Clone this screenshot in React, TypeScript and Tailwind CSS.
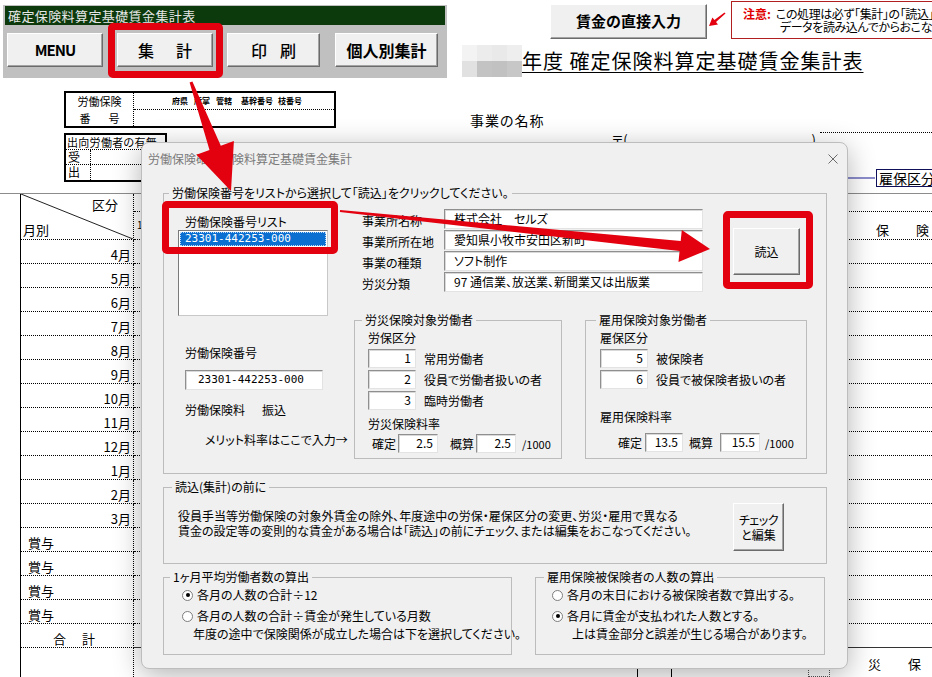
import React from "react";

const JP = "font-['Noto_Sans_CJK_JP','Noto_Sans',sans-serif] [font-feature-settings:'palt']";
const MONO = "font-['DejaVu_Sans_Mono','Liberation_Mono',monospace]";

const sunken =
  "bg-white border border-t-[#8f8f8f] border-l-[#8f8f8f] border-r-[#e3e3e3] border-b-[#e3e3e3] shadow-[inset_1px_1px_0_#d9d9d9]";
const raised =
  "bg-[#f0f0f0] border border-t-white border-l-white border-r-[#6b6b6b] border-b-[#6b6b6b] shadow-[inset_-1px_-1px_0_#a3a3a3]";

function arrowPoints(
  x1: number,
  y1: number,
  x2: number,
  y2: number,
  w0: number,
  w1: number,
  hl: number,
  hw: number
) {
  const dx = x2 - x1;
  const dy = y2 - y1;
  const L = Math.hypot(dx, dy);
  const ux = dx / L;
  const uy = dy / L;
  const px = -uy;
  const py = ux;
  const bx = x2 - ux * hl;
  const by = y2 - uy * hl;
  const pts = [
    [x1 + (px * w0) / 2, y1 + (py * w0) / 2],
    [bx + (px * w1) / 2, by + (py * w1) / 2],
    [bx + px * hw, by + py * hw],
    [x2, y2],
    [bx - px * hw, by - py * hw],
    [bx - (px * w1) / 2, by - (py * w1) / 2],
    [x1 - (px * w0) / 2, y1 - (py * w0) / 2],
  ];
  return pts.map(([a, b]) => `${a.toFixed(1)},${b.toFixed(1)}`).join(" ");
}

function Group({
  title,
  className = "",
  legendClass = "",
  children,
}: {
  title: string;
  className?: string;
  legendClass?: string;
  children?: React.ReactNode;
}) {
  return (
    <fieldset className={`min-w-0 shrink-0 border border-[#bcbcbc] ${className}`}>
      <legend className={`px-[3px] text-[12px] leading-[16px] ${legendClass}`}>{title}</legend>
      {children}
    </fieldset>
  );
}

function Radio({ on }: { on?: boolean }) {
  return (
    <span className="flex h-[11px] w-[11px] shrink-0 items-center justify-center rounded-full border border-[#7d7d7d] bg-white">
      {on && <span className="h-[4px] w-[4px] rounded-full bg-black" />}
    </span>
  );
}

function NumBox({ v, w }: { v: string; w: string }) {
  return (
    <div className={`${sunken} ${w} h-[19px] shrink-0 pr-[4px] text-right text-[12px] leading-[16px]`}>{v}</div>
  );
}

const months = ["4月", "5月", "6月", "7月", "8月", "9月", "10月", "11月", "12月", "1月", "2月", "3月"];

function SheetRow({ children, label, lastSolid }: { children?: React.ReactNode; label?: React.ReactNode; lastSolid?: boolean }) {
  return (
    <div className="flex h-[24px]">
      <div className="w-[21px] shrink-0 border-r border-black" />
      <div className="flex w-[113px] shrink-0 items-end border-b border-r border-dotted border-black text-[13px] leading-[17px]">
        {label}
      </div>
      <div className={`flex-1 border-b ${lastSolid ? "border-solid border-[#333]" : "border-dotted border-black"}`}>
        {children}
      </div>
    </div>
  );
}

export default function App() {
  return (
    <div className={`relative h-[677px] w-[932px] overflow-hidden bg-white text-black ${JP}`}>
      {/* toolbar + heading */}
      <div className="flex h-[80px] items-start">
        <div className="ml-[3px] mt-[5px] h-[73px] w-[444px] shrink-0 bg-[#c0c0c0] px-[2px] pt-[1px]">
          <div className="h-[19px] bg-[#0c3a0c] pl-[3px] text-[13px] leading-[19px] tracking-[0.4px] text-[#e6e6e6]">
            確定保険料算定基礎賃金集計表
          </div>
          <div className="mt-[8px] flex">
            <button className={`${raised} ml-[2px] h-[34px] w-[96px] text-[15px] font-bold tracking-[-1px]`}>MENU</button>
            <button className={`${raised} ml-[14px] flex h-[34px] w-[96px] items-center justify-center gap-[22px] text-[16px] font-medium`}>
              <span>集</span>
              <span>計</span>
            </button>
            <button className={`${raised} ml-[14px] flex h-[34px] w-[93px] items-center justify-center gap-[13px] text-[16px] font-medium`}>
              <span>印</span>
              <span>刷</span>
            </button>
            <button className={`${raised} ml-[15px] h-[34px] w-[103px] text-[16px] font-bold`}>個人別集計</button>
          </div>
        </div>
        <div className="flex flex-col">
          <div className="flex items-start pl-[103px]">
            <button className={`${raised} mt-[4px] h-[35px] w-[157px] shrink-0 text-[15px] font-bold`}>賃金の直接入力</button>
            <div className="ml-[24px] mt-[1px] flex h-[38px] w-[240px] shrink-0 items-start border border-[#b02020] bg-white pl-[11px] pt-[5px]">
              <span className="shrink-0 whitespace-nowrap text-[12px] font-bold leading-[14px] text-[#e00000]">注意:</span>
              <div className="ml-[5px] shrink-0 whitespace-nowrap text-[12px] leading-[13px] tracking-[-0.4px]">
                <div>この処理は必ず「集計」の「読込」で</div>
                <div className="pl-[4px]">データを読み込んでからおこなってください。</div>
              </div>
            </div>
          </div>
          <div className="ml-[15px] mt-[6px] flex h-[32px] items-center">
            <div className="grid h-[32px] w-[60px] shrink-0 grid-cols-4 grid-rows-2">
              <div className="bg-[#f3f3f3]" />
              <div className="bg-[#ececec]" />
              <div className="bg-[#e9e9e9]" />
              <div className="bg-[#eeeeee]" />
              <div className="bg-[#e1e1e1]" />
              <div className="bg-[#c3c3c3]" />
              <div className="bg-[#c1c1c1]" />
              <div className="bg-[#c7c7c7]" />
            </div>
            <span className="whitespace-nowrap text-[20px] leading-[26px] tracking-[1px] underline decoration-1 underline-offset-[3px]">
              年度 確定保険料算定基礎賃金集計表
            </span>
          </div>
        </div>
      </div>

      {/* insurance number / establishment */}
      <div className="flex h-[113px]">
        <div className="ml-[64px] flex w-[272px] shrink-0 flex-col">
          <div className="mt-[11px] flex h-[37px] border-2 border-black">
            <div className="flex w-[68px] flex-col border-r border-dotted border-black text-[11px]">
              <div className="flex h-[17px] items-center justify-center">労働保険</div>
              <div className="flex h-[16px] items-center justify-center gap-[18px]">
                <span>番</span>
                <span>号</span>
              </div>
            </div>
            <div className="flex flex-1 flex-col">
              <div className="flex h-[17px] items-center whitespace-nowrap border-b border-dotted border-black pl-[38px] text-[8px] font-bold leading-[10px]">
                <span>府県</span>
                <span className="ml-[6px]">所掌</span>
                <span className="ml-[6px]">管轄</span>
                <span className="ml-[9px]">基幹番号</span>
                <span className="ml-[5px]">枝番号</span>
              </div>
            </div>
          </div>
          <div className="mt-[5px] flex h-[49px] w-[103px] flex-col border-2 border-black text-[12px] leading-[14px]">
            <div className="h-[15px] whitespace-nowrap border-b border-dotted border-black pl-[1px] text-[11px] tracking-[0.3px]">
              出向労働者の有無
            </div>
            <div className="flex h-[15px] border-b border-dotted border-black">
              <div className="w-[25px] border-r border-dotted border-black pl-[2px]">受</div>
            </div>
            <div className="flex flex-1">
              <div className="w-[25px] border-r border-dotted border-black pl-[2px]">出</div>
            </div>
          </div>
        </div>
        <div className="ml-[134px] flex w-[462px] shrink-0 flex-col">
          <div className="mt-[33px] h-[16px] text-[14px] leading-[15px] tracking-[1px]">事業の名称</div>
          <div className="mt-[3px] flex h-[16px] text-[13px] leading-[16px]">
            <span className="ml-[142px]">〒(</span>
            <span className="ml-[184px]">)</span>
            <div className="ml-auto h-0 w-[112px] border-t border-dotted border-black" />
          </div>
          <div className="mt-[21px] flex h-[17px] items-center">
            <div className="ml-[378px] h-[2px] w-[27px] shrink-0 bg-[#8c8ccc]" />
            <div className="ml-[1px] h-[18px] w-[70px] shrink-0 whitespace-nowrap border border-[#10105a] pl-[2px] text-[14px] leading-[16px]">
              雇保区分
            </div>
          </div>
        </div>
      </div>

      {/* monthly grid */}
      <div className="border-t border-[#8c8c8c]">
        <div className="flex h-[46px]">
          <div className="w-[21px] shrink-0 border-r border-black" />
          <div className="relative flex w-[113px] shrink-0 flex-col justify-between border-b border-r border-dotted border-black text-[13px] leading-[16px]">
            <svg className="absolute inset-0" width="112" height="45" viewBox="0 0 112 45">
              <line x1="0" y1="0" x2="112" y2="45" stroke="#222" strokeWidth="1" />
            </svg>
            <div className="mt-[3px] self-end pr-[15px]">区分</div>
            <div className="mb-[1px] pl-[2px]">月別</div>
          </div>
          <div className="flex flex-1 flex-col">
            <div className="h-[18px] border-b border-dotted border-black" />
            <div className="flex flex-1 items-end justify-between border-b border-dotted border-black pb-[1px] pl-[3px] pr-[3px] text-[13px] leading-[16px]">
              <span className="mb-[8px] text-[10px] leading-[10px]">1</span>
              <span className="flex gap-[27px]">
                <span>保</span>
                <span>険</span>
              </span>
            </div>
          </div>
        </div>
        {months.map((m) => (
          <SheetRow key={m} label={<span className="ml-auto pr-[2px]">{m}</span>} />
        ))}
        {[0, 1, 2, 3].map((i) => (
          <SheetRow key={`b${i}`} label={<span className="pl-[7px]">賞与</span>} />
        ))}
        <SheetRow
          lastSolid
          label={
            <span className="flex gap-[16px] pl-[32px]">
              <span>合</span>
              <span>計</span>
            </span>
          }
        />
        <div className="flex h-[29px]">
          <div className="w-[21px] shrink-0 border-r border-black" />
          <div className="w-[113px] shrink-0 border-r border-dotted border-black" />
          <div className="flex flex-1 text-[13px]">
            <div className="ml-[503px] w-px bg-black" />
            <div className="ml-[33px] w-px bg-black" />
            <div className="ml-[136px] mt-[20px] h-[9px] w-[22px] border border-dotted border-[#555]" />
            <span className="ml-[38px] mt-[8px] leading-[16px]">災</span>
            <span className="ml-[27px] mt-[8px] leading-[16px]">保</span>
          </div>
        </div>
      </div>

      {/* dialog */}
      <div className="absolute left-[141px] top-[142px] flex h-[527px] w-[707px] flex-col rounded-[8px] border border-[#bdbdbd] bg-[#f0f0f0] shadow-[0_6px_28px_rgba(0,0,0,0.3)]">
        <div className="flex h-[31px] shrink-0 items-center justify-between pl-[6px] pr-[9px] text-[12px] text-[#7a7a7a]">
          <span>労働保険確定保険料算定基礎賃金集計</span>
          <svg width="10" height="10" viewBox="0 0 10 10">
            <path d="M0.5 0.5 L9.5 9.5 M9.5 0.5 L0.5 9.5" stroke="#6a6a6a" strokeWidth="1" />
          </svg>
        </div>
        <div className="pl-[21px] pt-[11px] text-[12px]">
          <Group title="労働保険番号をリストから選択して「読込」をクリックしてください。" className="h-[289px] w-[664px]" legendClass="ml-[5px]">
            <div className="flex pl-[14px]">
              {/* number list */}
              <div className="flex w-[150px] shrink-0 flex-col">
                <div className="mt-[13px] pl-[7px] leading-[16px]">労働保険番号リスト</div>
                <div className="h-[86px] border border-t-[#7a7a7a] border-l-[#7a7a7a] border-r-[#c8c8c8] border-b-[#c8c8c8] bg-white p-px">
                  <div className={`h-[14px] bg-[#0a6fd1] pl-[5px] text-[11px] leading-[14px] text-white outline-1 -outline-offset-1 outline-dotted outline-[#bcd8f5] ${MONO}`}>
                    23301-442253-000
                  </div>
                </div>
                <div className="mt-[29px] pl-[7px] leading-[16px]">労働保険番号</div>
                <div className={`${sunken} ml-[7px] mt-[9px] h-[20px] w-[138px] pl-[12px] text-[11px] leading-[18px] ${MONO}`}>
                  23301-442253-000
                </div>
                <div className="mt-[12px] flex pl-[7px] leading-[16px]">
                  <span>労働保険料</span>
                  <span className="ml-[17px]">振込</span>
                </div>
                <div className="mt-[14px] whitespace-nowrap pl-[27px] leading-[16px]">メリット料率はここで入力→</div>
              </div>

              <div className="ml-[26px] flex flex-col">
                {/* establishment fields + load button */}
                <div className="mt-[8px] flex">
                  <div className="flex flex-col pl-[8px]">
                    {[
                      ["事業所名称", "株式会社　セルズ"],
                      ["事業所所在地", "愛知県小牧市安田区新町"],
                      ["事業の種類", "ソフト制作"],
                      ["労災分類", "97 通信業、放送業、新聞業又は出版業"],
                    ].map(([k, v]) => (
                      <div key={k} className="mb-[1px] flex h-[20px]">
                        <div className="w-[82px] shrink-0 pt-[4px] leading-[16px]">{k}</div>
                        <div className={`${sunken} h-[20px] w-[259px] pl-[9px] leading-[18px]`}>{v}</div>
                      </div>
                    ))}
                  </div>
                  <button className={`${raised} ml-[30px] mt-[19px] h-[47px] w-[67px] text-[12px]`}>読込</button>
                </div>

                {/* worker categories */}
                <div className="mt-[19px] flex">
                  <Group title="労災保険対象労働者" className="h-[147px] w-[208px]" legendClass="ml-[7px]">
                    <div className="flex flex-col pl-[13px]">
                      <div className="mt-[2px] leading-[16px]">労保区分</div>
                      {[
                        ["1", "常用労働者"],
                        ["2", "役員で労働者扱いの者"],
                        ["3", "臨時労働者"],
                      ].map(([n, t], i) => (
                        <div key={n} className={`flex items-center ${i === 0 ? "mt-[3px]" : "mt-[2px]"}`}>
                          <NumBox v={n} w="w-[48px]" />
                          <span className="ml-[8px] leading-[16px]">{t}</span>
                        </div>
                      ))}
                      <div className="mt-[6px] leading-[16px]">労災保険料率</div>
                      <div className="mt-[2px] flex items-center">
                        <span className="ml-[4px] leading-[16px]">確定</span>
                        <div className="ml-[2px]">
                          <NumBox v="2.5" w="w-[40px]" />
                        </div>
                        <span className="ml-[12px] leading-[16px]">概算</span>
                        <div className="ml-[2px]">
                          <NumBox v="2.5" w="w-[40px]" />
                        </div>
                        <span className="ml-[6px] text-[11px] leading-[16px]">/1000</span>
                      </div>
                    </div>
                  </Group>
                  <Group title="雇用保険対象労働者" className="ml-[23px] h-[147px] w-[222px]" legendClass="ml-[10px]">
                    <div className="flex flex-col pl-[14px]">
                      <div className="mt-[2px] leading-[16px]">雇保区分</div>
                      {[
                        ["5", "被保険者"],
                        ["6", "役員で被保険者扱いの者"],
                      ].map(([n, t], i) => (
                        <div key={n} className={`flex items-center ${i === 0 ? "mt-[3px]" : "mt-[2px]"}`}>
                          <NumBox v={n} w="w-[48px]" />
                          <span className="ml-[8px] leading-[16px]">{t}</span>
                        </div>
                      ))}
                      <div className="mt-[20px] leading-[16px]">雇用保険料率</div>
                      <div className="mt-[8px] flex items-center">
                        <span className="ml-[18px] leading-[16px]">確定</span>
                        <div className="ml-[3px]">
                          <NumBox v="13.5" w="w-[38px]" />
                        </div>
                        <span className="ml-[6px] leading-[16px]">概算</span>
                        <div className="ml-[7px]">
                          <NumBox v="15.5" w="w-[40px]" />
                        </div>
                        <span className="ml-[5px] text-[11px] leading-[16px]">/1000</span>
                      </div>
                    </div>
                  </Group>
                </div>
              </div>
            </div>
          </Group>

          <Group title="読込(集計)の前に" className="mt-[5px] h-[85px] w-[664px]" legendClass="ml-[8px]">
            <div className="flex">
              <div className="mt-[13px] whitespace-nowrap pl-[14px] leading-[15px]">
                <div>役員手当等労働保険の対象外賃金の除外、年度途中の労保・雇保区分の変更、労災・雇用で異なる</div>
                <div>賃金の設定等の変則的な賃金がある場合は「読込」の前にチェック、または編集をおこなってください。</div>
              </div>
              <button className={`${raised} ml-auto mr-[42px] mt-[8px] flex h-[48px] w-[51px] shrink-0 flex-col items-center justify-center text-[12px] leading-[15px]`}>
                <span className="tracking-[-0.5px]">チェック</span>
                <span>と編集</span>
              </button>
            </div>
          </Group>

          <div className="mt-[5px] flex">
            <Group title="1ヶ月平均労働者数の算出" className="h-[86px] w-[349px]" legendClass="ml-[6px]">
              <div className="flex flex-col pl-[18px]">
                <div className="mt-[2px] flex h-[16px] items-center">
                  <Radio on />
                  <span className="ml-[4px] leading-[16px]">各月の人数の合計÷12</span>
                </div>
                <div className="mt-[5px] flex h-[16px] items-center">
                  <Radio />
                  <span className="ml-[4px] leading-[16px]">各月の人数の合計÷賃金が発生している月数</span>
                </div>
                <div className="mt-[2px] whitespace-nowrap pl-[11px] leading-[16px]">
                  年度の途中で保険関係が成立した場合は下を選択してください。
                </div>
              </div>
            </Group>
            <Group title="雇用保険被保険者の人数の算出" className="ml-[23px] h-[86px] w-[290px]" legendClass="ml-[8px]">
              <div className="flex flex-col pl-[16px]">
                <div className="mt-[2px] flex h-[16px] items-center">
                  <Radio />
                  <span className="ml-[4px] leading-[16px]">各月の末日における被保険者数で算出する。</span>
                </div>
                <div className="mt-[5px] flex h-[16px] items-center">
                  <Radio on />
                  <span className="ml-[4px] leading-[16px]">各月に賃金が支払われた人数とする。</span>
                </div>
                <div className="mt-[2px] whitespace-nowrap pl-[20px] leading-[16px]">
                  上は賃金部分と誤差が生じる場合があります。
                </div>
              </div>
            </Group>
          </div>
        </div>
      </div>

      {/* callout frames */}
      <div className="pointer-events-none absolute left-[108px] top-[23px] h-[55px] w-[115px] rounded-[5px] border-[7px] border-[#e3000f]" />
      <div className="pointer-events-none absolute left-[162px] top-[201px] h-[53px] w-[176px] rounded-[5px] border-[7px] border-[#e3000f]" />
      <div className="pointer-events-none absolute left-[723px] top-[211px] h-[78px] w-[90px] rounded-[5px] border-[7px] border-[#e3000f]" />

      {/* callout arrows */}
      <svg className="pointer-events-none absolute left-0 top-0" width="932" height="677" viewBox="0 0 932 677">
        <polygon points={arrowPoints(191, 82, 231, 191, 3, 12, 46, 20)} fill="#e3000f" />
        <polygon points={arrowPoints(340, 211, 710, 249, 2, 10, 30, 16)} fill="#e3000f" />
        <polygon points={arrowPoints(725, 13, 709, 26, 1.5, 2.5, 8, 4.5)} fill="#e3000f" />
      </svg>
    </div>
  );
}
